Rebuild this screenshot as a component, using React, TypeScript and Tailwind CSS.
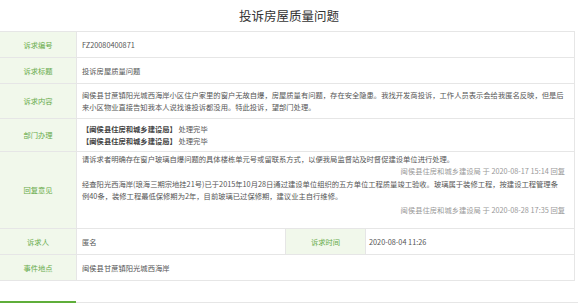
import React from "react";

const font = { fontFamily: '"Microsoft YaHei", "Noto Sans CJK SC", "Noto Sans", sans-serif' };

function Label({ children, w = "w-[77px]" }: { children: React.ReactNode; w?: string }) {
  return (
    <div className={`${w} shrink-0 bg-[#f1f8eb] text-[#67ab4a] flex items-center justify-center border-r border-[#e6e6e6]`}>
      {children}
    </div>
  );
}

export default function App() {
  return (
    <div className="w-[578px] h-[308px] overflow-hidden bg-white text-[7.3px] leading-[12px] text-[#555]" style={font}>
      <div className="h-[31px] flex items-center justify-center text-[12.5px] text-[#333] pt-[1px]">
        投诉房屋质量问题
      </div>
      <div className="mr-[3px] border-t border-r border-[#e6e6e6]">
        <div className="flex h-[26px] border-b border-[#e6e6e6]">
          <Label>诉求编号</Label>
          <div className="flex-1 flex items-center px-[5px]">FZ20080400871</div>
        </div>
        <div className="flex h-[26px] border-b border-[#e6e6e6]">
          <Label>诉求标题</Label>
          <div className="flex-1 flex items-center px-[5px]">投诉房屋质量问题</div>
        </div>
        <div className="flex h-[35px] border-b border-[#e6e6e6]">
          <Label>诉求内容</Label>
          <div className="flex-1 flex flex-col justify-center px-[5px] whitespace-nowrap">
            <div>闽侯县甘蔗镇阳光城西海岸小区住户家里的窗户无故自爆，房屋质量有问题，存在安全隐患。我找开发商投诉，工作人员表示会给我匿名反映，但是后</div>
            <div>来小区物业直接告知我本人说找谁投诉都没用。特此投诉，望部门处理。</div>
          </div>
        </div>
        <div className="flex h-[33px] border-b border-[#e6e6e6]">
          <Label>部门办理</Label>
          <div className="flex-1 flex flex-col justify-center px-[5px] whitespace-nowrap">
            <div><span className="font-bold text-[#444]">【闽侯县住房和城乡建设局】</span> 处理完毕</div>
            <div><span className="font-bold text-[#444]">【闽侯县住房和城乡建设局】</span> 处理完毕</div>
          </div>
        </div>
        <div className="flex h-[77px] border-b border-[#e6e6e6]">
          <Label>回复意见</Label>
          <div className="flex-1 flex flex-col pl-[5px] pr-[9px] pt-[1px] whitespace-nowrap">
            <div>请诉求者明确存在窗户玻璃自爆问题的具体楼栋单元号或留联系方式，以便我局监督站及时督促建设单位进行处理。</div>
            <div className="text-right text-[#999]">闽侯县住房和城乡建设局 于 2020-08-17 15:14 回复</div>
            <div className="mt-[1px]">经查阳光西海岸(琅海三期宗地挂21号)已于2015年10月28日通过建设单位组织的五方单位工程质量竣工验收。玻璃属于装修工程，按建设工程管理条</div>
            <div>例40条，装修工程最低保修期为2年，目前玻璃已过保修期，建议业主自行维修。</div>
            <div className="mt-[2px] text-right text-[#999]">闽侯县住房和城乡建设局 于 2020-08-28 17:35 回复</div>
          </div>
        </div>
        <div className="flex h-[26px] border-b border-[#e6e6e6]">
          <Label>诉求人</Label>
          <div className="w-[209px] shrink-0 flex items-center px-[5px] border-r border-[#e6e6e6]">匿名</div>
          <Label w="w-[80px]">诉求时间</Label>
          <div className="flex-1 flex items-center px-[3px]">2020-08-04 11:26</div>
        </div>
        <div className="flex h-[26px] border-b border-[#e6e6e6]">
          <Label>事件地点</Label>
          <div className="flex-1 flex items-center px-[5px]">闽侯县甘蔗镇阳光城西海岸</div>
        </div>
      </div>
      <div className="mt-[20px] border-b border-[#e6e6e6] h-[2px] flex items-end">
        <div className="w-[76px] h-[2px] bg-[#5fae3a] translate-y-[1px]"></div>
      </div>
    </div>
  );
}
